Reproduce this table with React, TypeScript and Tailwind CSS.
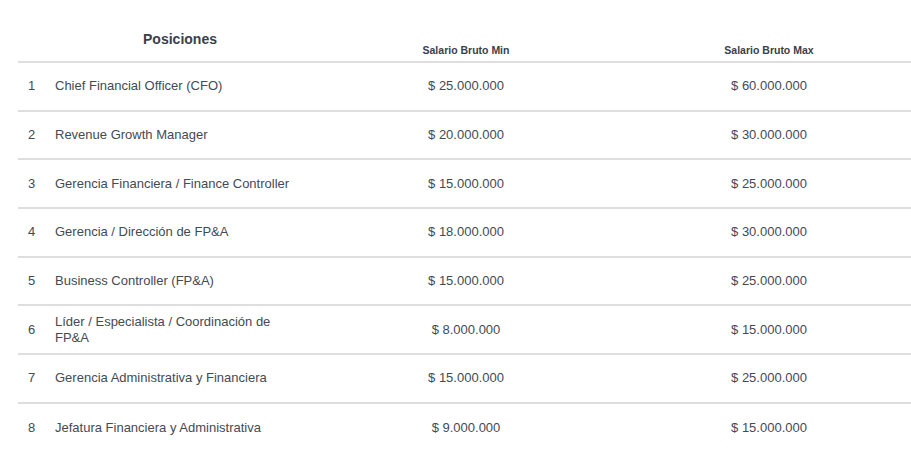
const rows = [
  { n: 1, pos: "Chief Financial Officer (CFO)", min: "$ 25.000.000", max: "$ 60.000.000" },
  { n: 2, pos: "Revenue Growth Manager", min: "$ 20.000.000", max: "$ 30.000.000" },
  { n: 3, pos: "Gerencia Financiera / Finance Controller", min: "$ 15.000.000", max: "$ 25.000.000" },
  { n: 4, pos: "Gerencia / Dirección de FP&A", min: "$ 18.000.000", max: "$ 30.000.000" },
  { n: 5, pos: "Business Controller (FP&A)", min: "$ 15.000.000", max: "$ 25.000.000" },
  { n: 6, pos: "Líder / Especialista / Coordinación de FP&A", min: "$ 8.000.000", max: "$ 15.000.000" },
  { n: 7, pos: "Gerencia Administrativa y Financiera", min: "$ 15.000.000", max: "$ 25.000.000" },
  { n: 8, pos: "Jefatura Financiera y Administrativa", min: "$ 9.000.000", max: "$ 15.000.000" },
];

export default function App() {
  return (
    <div className="w-[911px] h-[450px] bg-white pl-[18px] text-[#434a55] overflow-hidden" style={{ fontFamily: '"Liberation Sans", Arial, sans-serif' }}>
      {/* Header */}
      <div className="grid grid-cols-[37px_250px_322px_1fr] h-[63px] border-b-2 border-[#dedede] items-end">
        <div />
        <div className="text-center text-[14px] font-bold text-[#3a404b] pb-[11px]">Posiciones</div>
        <div className="text-center text-[10.5px] font-bold text-[#3a404b] pb-[2px]">Salario Bruto Min</div>
        <div className="text-center text-[10.5px] font-bold text-[#3a404b] pb-[2px]">Salario Bruto Max</div>
      </div>

      {/* Rows */}
      {rows.map((r) => (
        <div
          key={r.n}
          className="grid grid-cols-[37px_250px_322px_1fr] h-[48.7px] items-center border-b-2 border-[#dedede] last:border-b-0 text-[13px] leading-[16px]"
        >
          <div className="pl-[10px]">{r.n}</div>
          <div>{r.pos}</div>
          <div className="text-center">{r.min}</div>
          <div className="text-center">{r.max}</div>
        </div>
      ))}
    </div>
  );
}
